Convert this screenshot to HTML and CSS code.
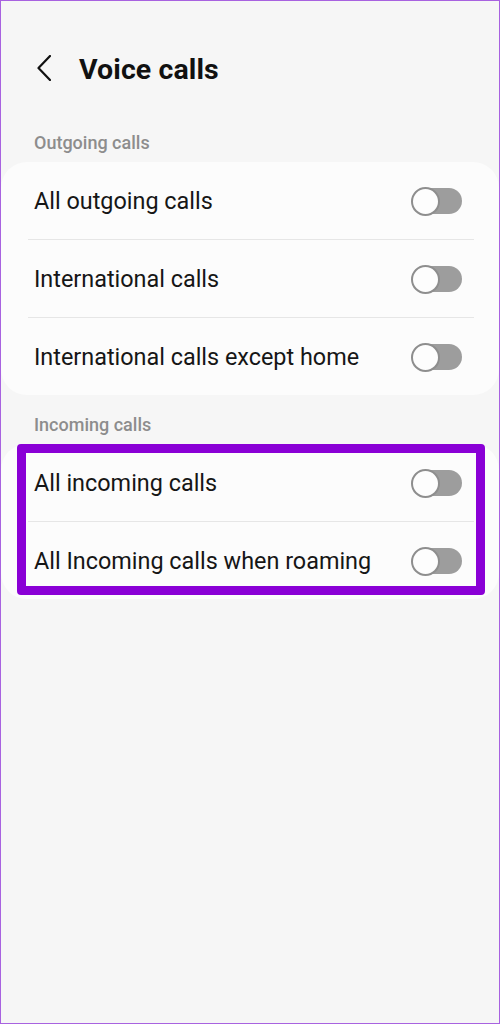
FILE: index.html
```html
<!DOCTYPE html>
<html>
<head>
<meta charset="utf-8">
<link rel="stylesheet" href="styles.css">
</head>
<body>
<div class="page">
  <div class="appbar">
    <svg class="back" width="14" height="26" viewBox="0 0 14 26"><polyline points="13,1 1.5,13 13,25" fill="none" stroke="#111" stroke-width="2.2" stroke-linecap="round" stroke-linejoin="round"/></svg>
    <h1 class="title">Voice calls</h1>
  </div>

  <div class="section-head first">Outgoing calls</div>
  <div class="card">
    <div class="row"><span class="label">All outgoing calls</span><span class="switch"><span class="knob"></span></span></div>
    <div class="sep"></div>
    <div class="row"><span class="label">International calls</span><span class="switch"><span class="knob"></span></span></div>
    <div class="sep"></div>
    <div class="row"><span class="label">International calls except home</span><span class="switch"><span class="knob"></span></span></div>
  </div>

  <div class="section-head">Incoming calls</div>
  <div class="card highlighted">
    <div class="row"><span class="label">All incoming calls</span><span class="switch"><span class="knob"></span></span></div>
    <div class="sep"></div>
    <div class="row"><span class="label">All Incoming calls when roaming</span><span class="switch"><span class="knob"></span></span></div>
    <div class="highlight"></div>
  </div>
</div>
</body>
</html>
```

FILE: styles.css
```css
html, body {
  margin: 0;
  padding: 0;
}
body {
  width: 500px;
  height: 1024px;
  font-family: Roboto, "Liberation Sans", sans-serif;
}
.page {
  box-sizing: border-box;
  width: 500px;
  height: 1024px;
  border: 1px solid #a862e0;
  background: #f6f6f6;
  color: #151515;
}
.appbar {
  display: flex;
  align-items: center;
  margin-top: 40px;
  height: 56px;
  padding-left: 36px;
}
.back {
  display: block;
  margin-right: 28px;
  margin-top: -3px;
}
.title {
  margin: 0;
  font-size: 28.5px;
  font-weight: 700;
  letter-spacing: 0.1px;
  color: #111;
}
.section-head {
  padding: 19px 0 8px 33px;
  line-height: 22px;
  font-size: 18px;
  font-weight: 500;
  color: #8d8d8d;
}
.section-head.first {
  padding-top: 35px;
}
.card {
  position: relative;
  background: #fcfcfc;
  border-radius: 26px;
}
.row {
  box-sizing: border-box;
  height: 77px;
  display: flex;
  align-items: center;
  justify-content: space-between;
  padding: 1px 37px 0 33px;
}
.label {
  font-size: 23.4px;
  color: #161616;
}
.sep {
  height: 1px;
  background: #e6e6e6;
  margin: 0 25px 0 27px;
}
.switch {
  display: flex;
  align-items: center;
  width: 50px;
  height: 26px;
  border-radius: 13px;
  background: #9d9d9d;
}
.knob {
  box-sizing: border-box;
  flex: none;
  width: 29px;
  height: 29px;
  margin-left: -1px;
  border-radius: 50%;
  background: #fdfdfd;
  border: 2px solid #8e8e8e;
}
.highlight {
  position: absolute;
  left: 16px;
  top: 0;
  width: 468px;
  height: 151px;
  box-sizing: border-box;
  border: 9px solid #8a00d6;
  border-radius: 4px;
  pointer-events: none;
}
```
